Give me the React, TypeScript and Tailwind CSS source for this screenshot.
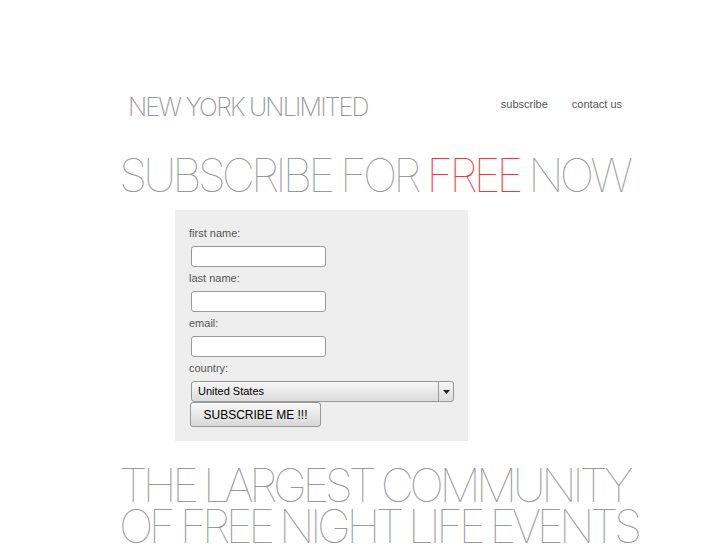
import React from "react"

const thin = { fontFamily: "Inter, 'Liberation Sans', sans-serif" }

function Field({ label }: { label: string }) {
  return (
    <div className="flex flex-col">
      <label className="text-[11px] leading-[14px] text-[#555] mb-[6px]">{label}</label>
      <input
        type="text"
        className="ml-[2px] w-[135px] h-[21px] bg-white border border-[#999] rounded-[3px] mb-[4px]"
      />
    </div>
  )
}

export default function App() {
  return (
    <div className="min-h-[545px] bg-white" style={{ fontFamily: "'Liberation Sans', Arial, sans-serif" }}>
      <div className="ml-[119px] w-[516px] pt-[92px]">
        <div className="flex items-center justify-between">
          <div className="ml-[9px] text-[25px] leading-[30px] font-extralight tracking-[-1.8px] text-[#999]" style={thin}>
            NEW YORK UNLIMITED
          </div>
          <nav className="flex gap-[24px] mr-[13px] mb-[6px] text-[11px] text-[#555]">
            <a href="#">subscribe</a>
            <a href="#">contact us</a>
          </nav>
        </div>

        <h1 className="mt-[30px] text-[46px] leading-[46px] font-thin tracking-[-4px] text-[#999] whitespace-nowrap" style={thin}>
          SUBSCRIBE FOR <span className="text-[#ff3333]">FREE</span> NOW
        </h1>

        <form className="ml-[56px] mt-[12px] w-[293px] bg-[#eeeeee] pl-[14px] pt-[16px] pb-[14px]">
          <Field label="first name:" />
          <Field label="last name:" />
          <Field label="email:" />
          <div className="flex flex-col">
            <label className="text-[11px] leading-[14px] text-[#555] mb-[6px]">country:</label>
            <div className="ml-[2px] w-[263px] h-[21px] flex items-stretch border border-[#999] rounded-[3px] bg-gradient-to-b from-[#f6f6f6] to-[#dcdcdc]">
              <span className="flex-1 pl-[6px] text-[11px] leading-[19px] text-black">United States</span>
              <span className="w-[15px] border-l border-[#999] flex items-center justify-center">
                <svg width="7" height="4" viewBox="0 0 7 4">
                  <path d="M0 0h7L3.5 4z" fill="#222" />
                </svg>
              </span>
            </div>
            <button
              type="button"
              className="ml-[1px] w-[131px] h-[25px] border border-[#999] rounded-[3px] bg-gradient-to-b from-[#f8f8f8] to-[#d8d8d8] text-[12px] text-black"
            >
              SUBSCRIBE ME !!!
            </button>
          </div>
        </form>

        <h2 className="mt-[24px] text-[46px] leading-[41px] font-thin tracking-[-4.5px] text-[#999] whitespace-nowrap" style={thin}>
          THE LARGEST COMMUNITY
          <br />
          OF FREE NIGHT LIFE EVENTS
        </h2>
      </div>
    </div>
  )
}
